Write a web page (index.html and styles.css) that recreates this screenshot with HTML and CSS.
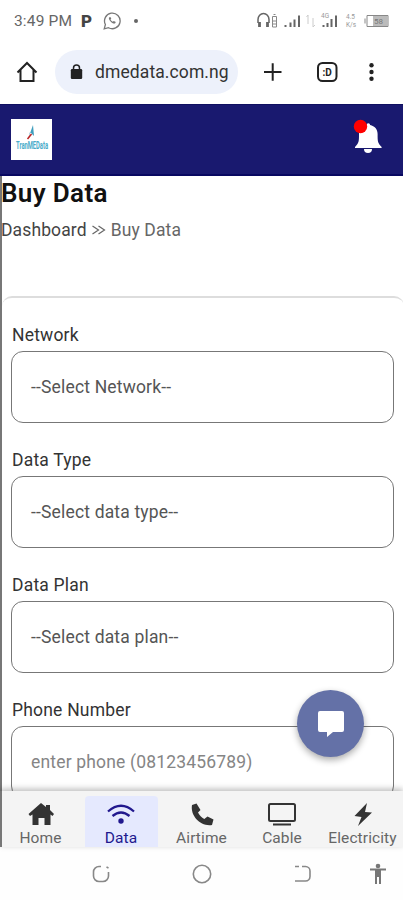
FILE: index.html
```html
<!DOCTYPE html>
<html lang="en">
<head>
<meta charset="utf-8">
<title>Buy Data</title>
<link rel="stylesheet" href="styles.css">
</head>
<body>
<div class="status">
  <span class="time">3:49 PM</span><span class="p-icon">P</span>
  <svg class="whatsapp" width="18" height="18" viewBox="0 0 18 18" fill="none" stroke="#777"><path d="M1.2 16.8l1.2-4.3A7.8 7.8 0 1 1 5.500 15.700z" stroke-width="1.300"/><path d="M6 5.500c-1 2 3.500 6.800 6 6l.8-1.500-2-1-1 .8C8.700 9.500 8 8.500 7.500 7.600l.8-.9-.9-1.700z" fill="#777" stroke="none"/></svg>
  <span class="dot"></span>
  <svg class="indicators" width="136" height="18" viewBox="0 0 136 18" fill="none" stroke="#666">
    <path d="M2 11V7.500a5 5.500 0 0 1 11 0V11" stroke-width="1.500"/><path d="M3.500 10v5M11.500 10v5" stroke-width="2.800"/>
    <path d="M16.500 4.500h4v10.500h-4zM17.500 2.500h2M17 9h3M17 12h3" stroke="#888"/>
    <path d="M29.500 13v2M34.500 10.500v4.500M38.500 7.500v7.500M43 3.500V15" stroke-width="2"/>
    <path d="M52 3v9M50.500 5L52 3M57 6v9M57 15l2-2" stroke="#ccc"/>
    <path d="M67.500 13v2M71.500 11v4M75.500 7v8M80 3.500V15" stroke-width="2"/>
    <g class="tiny"><text x="65" y="6">4G</text><text x="90" y="7">4.5</text><text x="90" y="15">K/s</text></g>
    <path d="M111 3.500h21v11h-21zM109 6.500v5" stroke="#888"/><path d="M117 4h15v10h-15z" fill="#bbb" stroke="none"/><text class="battery" x="118" y="12">58</text>
  </svg>
</div>
<div class="browser">
  <svg class="home" width="22" height="22" viewBox="0 0 22 22" fill="none" stroke="#222" stroke-width="2"><path d="M1.500 11.500L11 2l9.500 9.500M4.500 9v11h13V9"/></svg>
  <div class="url"><svg width="13" height="16" viewBox="0 0 13 16"><path d="M3.500 6V4a3 3 0 0 1 6 0v2" fill="none" stroke="#222" stroke-width="1.500"/><rect x=".8" y="5" width="11.400" height="10" rx="1.200" fill="#222"/></svg><span>dmedata.com.ng</span></div>
  <svg class="tools" width="110" height="22" viewBox="0 0 110 22" fill="none" stroke="#222" stroke-width="2"><path d="M0 11h17.500M8.700 2.200v17.600"/><rect x="54" y="2" width="18.500" height="18" rx="4.500"/><g fill="#222" stroke="none"><circle cx="107.500" cy="4.200" r="2.200"/><circle cx="107.500" cy="11" r="2.200"/><circle cx="107.500" cy="17.800" r="2.200"/><text class="tab" x="58.500" y="14.500">:D</text></g></svg>
</div>
<header class="header">
  <svg class="logo" width="41" height="41" viewBox="0 0 41 41"><path fill="#fff" d="M0 0h41v41H0z"/><path d="M17 20L22 6l1 11-4-4z" fill="#3f9dbd"/><path d="M16.500 20l4-5" stroke="#b22" stroke-width="1.500"/><text class="brand" x="5" y="30" textLength="32" lengthAdjust="spacingAndGlyphs">TranMEData</text></svg>
  <svg class="bell" width="30" height="36" viewBox="0 0 30 36"><path d="M2 28c4-4 4-6 4-13 0-5 3-8 7.500-9a1.800 1.800 0 0 1 3.600 0c4.500 1 7.500 4 7.500 9 0 7 0 9 4 13v1H2z" fill="#fff"/><path d="M11 30h8a4 4 0 0 1-8 0z" fill="#fff"/><circle cx="7.500" cy="7.500" r="6.700" fill="#f00"/></svg>
</header>
<main class="page">
  <h1>Buy Data</h1>
  <div class="crumbs"><span class="dash">Dashboard</span><svg width="14" height="10" viewBox="0 0 14 10" fill="none" stroke="#666" stroke-width="1.200"><path d="M.5 1l6 4-6 4M6.500 1l6 4-6 4"/></svg><span class="current">Buy Data</span></div>
  <form class="card">
    <label>Network</label><div class="field"><span>--Select Network--</span></div>
    <label>Data Type</label><div class="field"><span>--Select data type--</span></div>
    <label>Data Plan</label><div class="field"><span>--Select data plan--</span></div>
    <label>Phone Number</label><div class="field phone"><span>enter phone (08123456789)</span></div>
  </form>
</main>
<nav class="nav">
  <div class="item"><svg width="28" height="26" viewBox="0 0 28 26"><path d="M14 1l5 4V3h4v5l4 4-1.500 2-2-1.500V23h-6v-7h-6v7h-6V12.500L3 14l-1.500-2z" fill="#333"/></svg><span>Home</span></div>
  <div class="item active"><svg width="28" height="26" viewBox="0 0 28 26" fill="none" stroke="#21188e" stroke-width="2.300"><path d="M1 9.500q13-11.500 26 0M5.500 14q8.500-7 17 0"/><circle cx="14" cy="19" r="2.700" fill="#21188e" stroke="none"/></svg><span>Data</span></div>
  <div class="item"><svg width="26" height="26" viewBox="0 0 26 26"><path d="M7.500 1.500L3 3C1 14 12 25 23 23L24.500 17.500l-6-3-3.200 2.500C12.500 15.500 10.500 13.500 9 10.500L11.500 8z" fill="#333"/></svg><span>Airtime</span></div>
  <div class="item"><svg width="28" height="26" viewBox="0 0 28 26" fill="none" stroke="#333" stroke-width="2"><rect x="1" y="2" width="26" height="17" rx="1.500"/><path d="M5 22.500h18"/></svg><span>Cable</span></div>
  <div class="item"><svg width="20" height="26" viewBox="0 0 20 26"><path d="M14 1L1.500 14l7 1-3.500 9L19 10.500l-7-.5z" fill="#333"/></svg><span>Electricity</span></div>
</nav>
<div class="system">
  <svg width="18" height="18" viewBox="0 0 18 18"><path d="M9 1.500H7A5.500 5.500 0 0 0 1.500 7v4A5.500 5.500 0 0 0 7 16.500h4a5.500 5.500 0 0 0 5.500-5.500V7M14.500 2l2 1"/></svg>
  <svg width="20" height="20" viewBox="0 0 20 20"><circle cx="10" cy="10" r="8.700"/></svg>
  <svg width="18" height="18" viewBox="0 0 18 18"><path d="M1 1.500h4M8 1.500h3.500a4.500 4.500 0 0 1 4.500 4.500v5.500a4.500 4.500 0 0 1-4.500 4.500H1"/></svg>
  <svg width="18" height="22" viewBox="0 0 18 22"><circle cx="9" cy="3" r="2.300" fill="#777" stroke="none"/><path d="M1 6.500h16M9 7v7M7 7v14M11 7v14" stroke-width="2"/></svg>
</div>
<button class="chat" aria-label="Chat"><svg width="28" height="28" viewBox="0 0 28 28"><path d="M3 1h22q2 0 2 2v17q0 2-2 2H16l-6 5v-5H3q-2 0-2-2V3q0-2 2-2z" fill="#fff"/></svg></button>
</body>
</html>
```
FILE: styles.css
```css
* { box-sizing: border-box; }
body { margin: 0; width: 403px; height: 900px; overflow: hidden; position: relative; background: #fff; font-family: Roboto, "Liberation Sans", sans-serif; color: #222; display: flex; flex-direction: column; }
svg { display: block; flex: none; }
.status { height: 42px; flex: none; display: flex; align-items: center; padding-left: 14px; color: #666; }
.time { font-size: 15.5px; width: 67px; white-space: nowrap; letter-spacing: .15px; }
.p-icon { font-weight: 900; font-size: 17px; width: 22px; color: #444; }
.dot { width: 4px; height: 4px; border-radius: 50%; background: #666; margin-left: 13px; }
.indicators { margin-left: 118px; }
.tiny { fill: #999; stroke: none; font-size: 6.5px; }
.battery { fill: #777; stroke: none; font-size: 8px; }
.browser { height: 62px; flex: none; display: flex; align-items: center; padding: 0 0 2px 16px; }
.url { width: 183px; height: 44px; margin-left: 17px; border-radius: 22px; background: #edf1fb; display: flex; align-items: center; padding-left: 15px; font-size: 17.5px; color: #333; }
.url span { margin-left: 12px; letter-spacing: .1px; }
.tools { margin-left: 26px; }
.tab { font-size: 10px; font-weight: 700; }
.header { height: 72px; flex: none; background: #19196f; border-top: 1px solid #101060; border-bottom: 2px solid #080861; display: flex; justify-content: space-between; padding: 14px 20px 0 11px; }
.brand { font-size: 10px; font-weight: 700; fill: #49abc9; }
.page { height: 615px; flex: none; overflow: hidden; border-left: 2px solid #777; }
h1 { font-size: 26px; line-height: 32px; font-weight: 600; margin: 1px 0 0 -1px; color: #111; letter-spacing: .35px; }
.crumbs { display: flex; align-items: center; height: 24px; margin: 9px 0 0 -1px; font-size: 17.5px; color: #666; letter-spacing: .12px; }
.crumbs svg { margin: 0 5px; }
.dash { color: #444; }
.card { width: 402px; height: 520px; margin-top: 54px; border: 1px solid #ddd; border-width: 2px 0 0; border-radius: 10px; padding: 27px 10px 0 9px; }
label { display: block; height: 26px; line-height: 21px; font-size: 17.5px; color: #333; letter-spacing: .2px; padding-left: 1px; }
.field { height: 72px; border: 1px solid #777; border-radius: 12px; padding-left: 19px; display: flex; align-items: center; font-size: 17.5px; color: #555; margin-bottom: 27px; letter-spacing: .17px; }
.phone { color: #858585; }
.nav { height: 56px; flex: none; background: #f4f4f4; border-left: 2px solid #777; box-shadow: 0 -2px 6px #0004; display: flex; gap: 7.5px; z-index: 1; padding: 5px 0 0 2px; }
.item { width: 73px; flex: none; display: flex; flex-direction: column; align-items: center; padding-top: 6px; font-size: 15.5px; line-height: 21px; color: #666; letter-spacing: .1px; }
.active { background: #e5e9fe; color: #21188e; border-radius: 4px 4px 0 0; }
.system { height: 53px; flex: none; background: #fefefe; display: flex; align-items: center; padding-left: 92px; fill: none; stroke: #888; stroke-width: 1.6; }
.system svg { margin-right: 82px; }
.system svg:nth-child(3) { margin-right: 57px; }
.system svg:nth-child(4) { stroke: #777; margin-right: 0; }
.chat { position: absolute; z-index: 2; left: 297px; top: 690px; width: 67px; height: 67px; border: 0; padding: 0; border-radius: 50%; background: #6471a7; box-shadow: 0 3px 7px #0005; display: flex; align-items: center; justify-content: center; }
```
